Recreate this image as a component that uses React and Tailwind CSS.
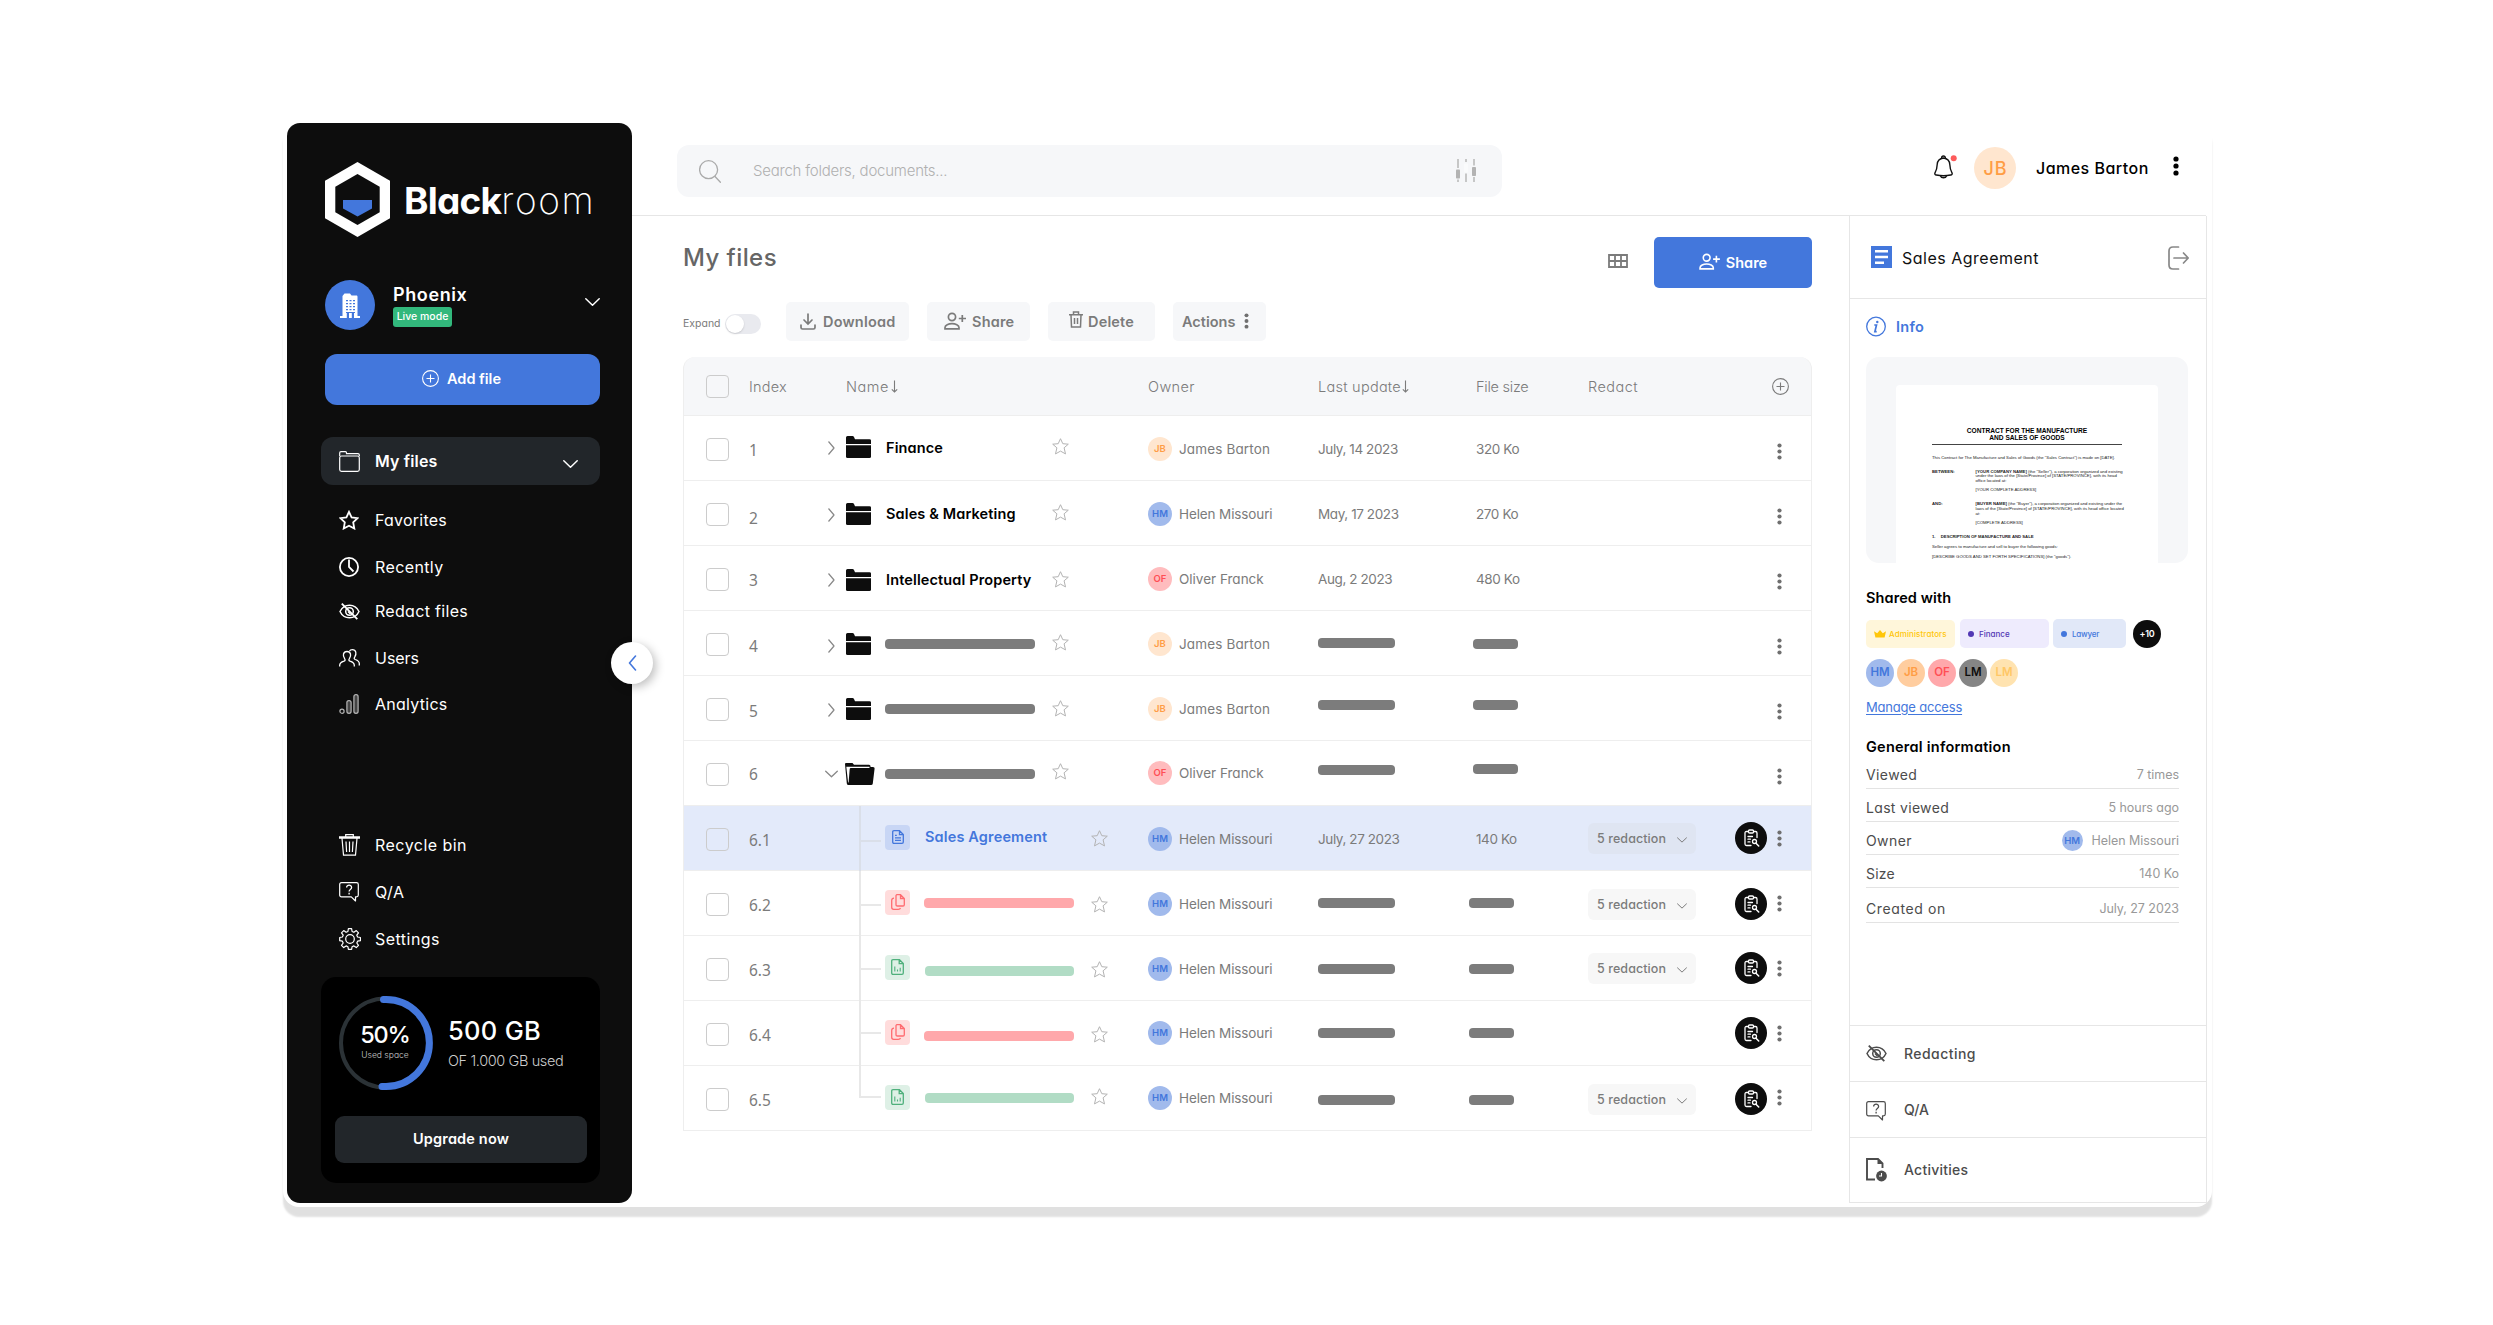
import { Fragment } from 'react';
import clsx from 'clsx';

const mainNav = [
  { label: 'Favorites', icon: StarBoldIcon, gap: 'mt-[25px]', text: 'tracking-[0.23px]' },
  { label: 'Recently', icon: ClockIcon, gap: 'mt-[27px]', text: 'tracking-[0.38px]' },
  { label: 'Redact files', icon: EyeOffIcon, gap: 'mt-[24px]', text: 'tracking-[0.31px]' },
  { label: 'Users', icon: UsersIcon, gap: 'mt-[27px]', text: 'tracking-[-0.03px]' },
  { label: 'Analytics', icon: ChartIcon, gap: 'mt-[26px]', text: 'tracking-[0.26px]' },
];

const footNav = [
  { label: 'Recycle bin', icon: BinIcon, gap: 'mt-[121px]', text: 'tracking-[0.47px]' },
  { label: 'Q/A', icon: QuestionIcon, gap: 'mt-[27px]', text: 'tracking-[0.5px]' },
  { label: 'Settings', icon: GearIcon, gap: 'mt-[27px]', text: 'tracking-[0.47px]' },
];

const people = {
  jb: { initials: 'JB', name: 'James Barton', color: 'bg-[#ffe6cf] text-[#ff9d45]', text: 'tracking-[0.14px]' },
  hm: { initials: 'HM', name: 'Helen Missouri', color: 'bg-[#a1baec] text-[#4377dc]', text: 'tracking-[-0.12px]' },
  of: { initials: 'OF', name: 'Oliver Franck', color: 'bg-[#ffbcbe] text-[#ff4f55]', text: '' },
};

// pt: top padding of each cell, in column order
const folders = [
  { id: 1, name: 'Finance', owner: 'jb', date: 'July, 14 2023', size: '320 Ko', pt: ['pt-6', 'pt-[25px]', 'pt-5', 'pt-[22px]', 'pt-[22px]', 'pt-[21px]', 'pt-[23px]', 'pt-[23px]'] },
  { id: 2, name: 'Sales & Marketing', owner: 'hm', date: 'May, 17 2023', size: '270 Ko', pt: ['pt-[27px]', 'pt-[27px]', 'pt-[22px]', 'pt-[23px]', 'pt-[23px]', 'pt-[21px]', 'pt-[23px]', 'pt-[23px]'] },
  { id: 3, name: 'Intellectual Property', owner: 'of', date: 'Aug, 2 2023', size: '480 Ko', pt: ['pt-6', 'pt-[27px]', 'pt-[23px]', 'pt-6', 'pt-[25px]', 'pt-[21px]', 'pt-[23px]', 'pt-[23px]'] },
  { id: 4, owner: 'jb', pt: ['pt-[25px]', 'pt-7', 'pt-[22px]', 'pt-7', 'pt-[23px]', 'pt-[21px]', 'pt-[27px]', 'pt-7'] },
  { id: 5, owner: 'jb', pt: ['pt-[25px]', 'pt-[27px]', 'pt-[22px]', 'pt-7', 'pt-6', 'pt-[21px]', 'pt-6', 'pt-6'] },
  { id: 6, owner: 'of', open: true, pt: ['pt-[23px]', 'pt-[29px]', 'pt-[22px]', 'pt-7', 'pt-[22px]', 'pt-5', 'pt-6', 'pt-[23px]'] },
];

const files = [
  { id: '6.1', kind: 'doc', name: 'Sales Agreement', date: 'July, 27 2023', size: '140 Ko', redact: true, pt: ['pt-[34px]', 'pt-[21px]', 'pt-6', 'pt-[21px]', 'pt-[23px]', 'pt-[23px]', 'pt-[17px]', 'pt-4', 'pt-6'] },
  { id: '6.2', kind: 'pdf', redact: true, pt: ['pt-[33px]', 'pt-[27px]', 'pt-[25px]', 'pt-[21px]', 'pt-[27px]', 'pt-[27px]', 'pt-[18px]', 'pt-[17px]', 'pt-6'] },
  { id: '6.3', kind: 'sheet', redact: true, pt: ['pt-8', 'pt-[30px]', 'pt-[25px]', 'pt-[21px]', 'pt-7', 'pt-7', 'pt-[17px]', 'pt-4', 'pt-6'] },
  { id: '6.4', kind: 'pdf', pt: ['pt-[31px]', 'pt-[30px]', 'pt-[25px]', 'pt-5', 'pt-[27px]', 'pt-[27px]', 'pt-[18px]', 'pt-4', 'pt-6'] },
  { id: '6.5', kind: 'sheet', redact: true, last: true, pt: ['pt-[30px]', 'pt-[27px]', 'pt-[22px]', 'pt-5', 'pt-[29px]', 'pt-[29px]', 'pt-[18px]', 'pt-[17px]', 'pt-[23px]'] },
];

const kinds = {
  doc: { box: 'bg-[#c8d6f5] text-[#4377dc]', bar: 'bg-[#4377dc]', icon: DocIcon },
  pdf: { box: 'bg-[#ffdcdc] text-[#ff6b70]', bar: 'bg-[#ffa8ab] -ml-px w-[150px]', icon: CopyIcon },
  sheet: { box: 'bg-[#def0e6] text-[#4fb07c]', bar: 'bg-[#b1dcc5] w-[149px]', icon: SheetIcon },
};

const details = [
  { label: 'Viewed', value: '7 times', h: 'h-[27px]', text: 'tracking-[0.4px]' },
  { label: 'Last viewed', value: '5 hours ago', h: 'h-[33px]', text: 'tracking-[0.32px]' },
  { label: 'Owner', value: 'Helen Missouri', avatar: true, h: 'h-[33px]', text: 'tracking-[0.4px]' },
  { label: 'Size', value: '140 Ko', h: 'h-[33px]', text: 'tracking-[0.2px]' },
  { label: 'Created on', value: 'July, 27 2023', h: 'h-[35px]', text: 'tracking-[0.6px]' },
];

const headCols = 'grid-cols-[65px_97px_302px_170px_158px_112px_184px_1fr]';
const folderCols = 'grid-cols-[65px_79px_18px_39px_167px_96px_170px_158px_300px_1fr]';
const fileCols = 'grid-cols-[65px_110px_26px_40px_166px_57px_170px_158px_112px_147px_41px_1fr]';

export default function App() {
  return (
    <div className="h-[1325px] w-[2493px] overflow-hidden bg-white pl-[283px] pt-[119px] font-['Inter',sans-serif] [font-feature-settings:'cv11']">
      <div className="flex h-[1088px] w-[1929px] rounded-[16px] bg-white p-1 shadow-[0_10px_2px_rgba(0,0,0,0.12)]">
        <Sidebar />
        <div className="flex w-[1575px] flex-col">
          <TopBar />
          <div className="flex h-[988px]">
            <Files />
            <InfoPanel />
          </div>
        </div>
      </div>
    </div>
  );
}

function Sidebar() {
  return (
    <aside className="relative flex h-[1080px] w-[345px] shrink-0 flex-col rounded-[13px] bg-[#0d0d0d] pl-[34px] pr-8 text-white">
      {/* Logo */}
      <div className="ml-1 mt-[39px] flex h-[75px] items-center">
        <svg width="65" height="75" viewBox="0 0 65 75">
          <path d="M32.5 0 65 18.8V56.2L32.5 75 0 56.2V18.8Z" fill="#fff" />
          <path d="M32.5 12 54.7 24.8V50.3L32.5 63 10.3 50.3V24.8Z" fill="#0d0d0d" />
          <path d="M18 38H47V46.5L32.5 54.5 18 46.5Z" fill="#4377dc" />
        </svg>
        <div className="ml-[14px] whitespace-nowrap pt-[3px] text-[37px] leading-[40px]">
          <span className="font-bold tracking-[-0.75px]">Black</span>
          <span className="font-extralight tracking-[1.6px]">room</span>
        </div>
      </div>

      {/* Workspace */}
      <div className="ml-1 mt-[43px] flex h-[50px]">
        <div className="flex h-[50px] w-[50px] items-center justify-center rounded-full bg-[#4377dc]">
          <BuildingIcon />
        </div>
        <div className="ml-[18px]">
          <div className="mt-1 text-[18px] font-semibold leading-[21px] tracking-[0.6px]">Phoenix</div>
          <div className="mt-[2px] flex h-5 w-[59px] items-center justify-center rounded-[3px] bg-[#32b87c] text-[10.5px] font-medium">Live mode</div>
        </div>
        <Chevron className="ml-auto mt-[18px] h-2 w-[15px]" />
      </div>

      <button className="ml-1 mt-6 flex h-[51px] items-center justify-center rounded-xl bg-[#4377dc] pb-[2px] pr-[2px] text-[14.5px] font-semibold">
        <PlusCircle className="mr-2 h-[17px] w-[17px]" />
        Add file
      </button>

      <div className="mt-8 flex h-12 items-center rounded-xl bg-[#22262a] pl-[18px] pr-[22px]">
        <FolderLineIcon />
        <span className="ml-[15px] text-[16px] font-semibold tracking-[0.15px]">My files</span>
        <Chevron className="ml-auto mt-[6px] h-2 w-[15px]" />
      </div>

      {[...mainNav, ...footNav].map(({ label, icon: Icon, gap, text }) => (
        <div key={label} className={clsx('flex h-5 items-center pl-[18px] text-[16px]', gap)}>
          <span className="flex w-9 shrink-0 items-center"><Icon /></span>
          <span className={text}>{label}</span>
        </div>
      ))}

      {/* Storage */}
      <div className="mt-7 flex h-[206px] flex-col rounded-[15px] bg-black px-[14px]">
        <div className="mt-[19px] flex">
          <div className="relative ml-1 h-[94px] w-[94px]">
            <svg width="94" height="94" viewBox="0 0 94 94" fill="none">
              <circle cx="46.500" cy="47" r="44.500" stroke="#2b3236" strokeWidth="4" />
              <path d="M44.5 3.6H47a43.4 43.4 0 0 1 0 86.8H43" stroke="#4377dc" strokeWidth="7" strokeLinecap="round" />
            </svg>
            <div className="absolute inset-0 pr-[2px] text-center">
              <div className="mt-[26px] text-[23.5px] font-medium leading-[26px] tracking-[-1.1px]">50%</div>
              <div className="mt-[2px] text-[8.5px] font-light leading-[10px] text-[#ccc]">Used space</div>
            </div>
          </div>
          <div className="ml-[15px]">
            <div className="mt-[20px] text-[25.5px] font-medium leading-[30px] tracking-[0.3px]">500 GB</div>
            <div className="mt-[5px] text-[14.5px] font-light leading-5 tracking-[-0.38px] text-[#ccc]">OF 1.000 GB used</div>
          </div>
        </div>
        <button className="mt-[26px] flex h-[47px] w-[252px] items-center justify-center rounded-[9px] bg-[#22262a] pb-[2px] text-[14.5px] font-semibold tracking-[0.16px]">
          Upgrade now
        </button>
      </div>

      {/* Collapse handle sits over the sidebar edge */}
      <div className="absolute right-[-21px] top-[519px] flex h-[42px] w-[42px] items-center justify-center rounded-full bg-white text-[#4377dc] shadow-[3px_3px_10px_rgba(0,0,0,0.25)]">
        <svg width="9" height="16" viewBox="0 0 9 16" fill="none" stroke="currentColor" strokeWidth="1.6" strokeLinecap="round" strokeLinejoin="round">
          <path d="M7.5 1 1.5 8l6 7" />
        </svg>
      </div>
    </aside>
  );
}

function TopBar() {
  return (
    <header className="flex h-[93px] w-[1574px] border-b border-[#e6e6e6]">
      <div className="ml-[45px] mt-[22px] flex h-[52px] w-[825px] items-center rounded-xl bg-[#f6f7f9] pl-[22px] pr-[26px] text-[#aaa]">
        <svg width="22" height="23" viewBox="0 0 22 23" fill="none" stroke="currentColor" strokeWidth="1.3" strokeLinecap="round">
          <circle cx="9.6" cy="9.7" r="9" />
          <path d="m16 16.5 5.4 5.8" />
        </svg>
        <span className="ml-8 text-[15px] font-light tracking-[-0.23px] text-[#b0b0b0]">Search folders, documents...</span>
        <svg className="ml-auto" width="20" height="24" viewBox="0 0 20 24" fill="#b3b3b3">
          <path d="M1.3 0h1.4v9H1.3zM1.3 20.5h1.4V23H1.3zM9.3 0h1.4v3H9.3zM9.3 14.5h1.4V23H9.3zM17.3 0h1.4v6.5h-1.4zM17.3 18h1.4v5h-1.4z" />
          <rect y="10.5" width="4" height="9" rx=".8" />
          <rect x="16" y="8" width="4" height="9" rx=".8" />
          <rect x="8" y="4.5" width="4" height="9" rx=".8" fill="#fafbfc" />
        </svg>
      </div>
      <div className="ml-[432px] mt-6 flex h-[42px] items-center">
        <svg className="mb-[2px]" width="23" height="24" viewBox="0 0 23 24" fill="none" stroke="#111" strokeWidth="1.4">
          <path d="M9.5 3C5.8 3.5 3.4 6 3.2 9.5c-.2 4.500-.9 6.400-2.200 8.400-.5 1 .1 2 1.300 2.100 4.800.9 9.600.9 14.400 0 1.200-.1 1.800-1.100 1.300-2.100-1.300-2-2-3.900-2.200-8.400C15.600 6 13.200 3.5 9.5 3Z" />
          <path d="M7.6 3.2C7.6.3 11.400.3 11.400 3.200M6.5 21c.8 2.400 5.200 2.400 6 0" />
          <circle cx="19.700" cy="3.200" r="3" fill="#fd5b5b" stroke="none" />
        </svg>
        <span className="ml-[17px] flex h-[42px] w-[42px] items-center justify-center rounded-full bg-[#ffe6cf] pl-px text-[18px] font-medium tracking-[0.9px] text-[#ff9d45]">JB</span>
        <span className="ml-[20px] whitespace-nowrap text-[16px] font-medium tracking-[0.48px] text-black">James Barton</span>
        <svg className="mb-[5px] ml-[24px]" width="6" height="20" viewBox="0 0 6 20" fill="#000">
          <circle cx="3" cy="3" r="2.6" />
          <circle cx="3" cy="10" r="2.6" />
          <circle cx="3" cy="17" r="2.6" />
        </svg>
      </div>
    </header>
  );
}

function Files() {
  return (
    <main className="w-[1217px] shrink-0 pl-[51px]">
      <div className="flex h-[93px] w-[1129px]">
        <h1 className="mt-[27px] text-[24px] font-medium leading-[30px] tracking-[0.43px] text-[#666]">My files</h1>
        <svg className="ml-auto mr-[26px] mt-[38px]" width="20" height="14" viewBox="0 0 20 14" fill="none" stroke="#7b7b7b" strokeWidth="1.8">
          <path d="M1 1h18v12H1zM1 7h18M7 1v12M13 1v12" />
        </svg>
        <button className="mt-[21px] flex h-[51px] w-[158px] items-center justify-center rounded-[5px] bg-[#4377dc] text-[14.5px] font-semibold text-white">
          <UserPlusIcon className="mb-px mr-[6px] h-[17px] w-[21px]" />
          Share
        </button>
      </div>

      {/* Toolbar */}
      <div className="flex h-[48px] text-[14.5px] font-semibold text-[#7b7b7b]">
        <span className="mt-[5px] w-[38px] text-[10.5px] font-normal leading-[20px]">Expand</span>
        <span className="ml-[4px] mt-[5px] h-5 w-9 rounded-full bg-[#e9eaef] p-px">
          <span className="block h-[18px] w-[18px] rounded-full bg-white shadow-[0_1px_2px_rgba(0,0,0,0.15)]" />
        </span>
        <div className="-mt-[7px] ml-[25px] flex gap-[18px]">
          <button className="flex h-[39px] w-[123px] items-center rounded-[5px] bg-[#f6f7f9] pl-[14px] tracking-[0.2px]">
            <svg className="mr-[7px]" width="16" height="17" viewBox="0 0 16 17" fill="none" stroke="currentColor" strokeWidth="1.7" strokeLinecap="round">
              <path d="M8 1v9.500M4 7l4 4 4-4M1 12v2.500q0 1.500 1.500 1.500h11q1.500 0 1.500-1.500V12" />
            </svg>
            Download
          </button>
          <button className="flex h-[39px] w-[103px] items-center rounded-[5px] bg-[#f6f7f9] pl-[17px] tracking-[0.2px]">
            <UserPlusIcon className="mr-[6px] h-[18px] w-[22px]" />
            Share
          </button>
          <button className="flex h-[39px] w-[107px] items-center rounded-[5px] bg-[#f6f7f9] pl-[21px] tracking-[0.17px]">
            <svg className="mb-[3px] mr-[5px]" width="14" height="17" viewBox="0 0 14 17" fill="none" stroke="currentColor" strokeWidth="1.5">
              <path d="M0 3.800h14M4.500 3.500V1h5v2.500M2 4l.5 12h9L12 4M5.500 7v6M8.500 7v6" />
            </svg>
            Delete
          </button>
          <button className="flex h-[39px] w-[93px] items-center rounded-[5px] bg-[#f6f7f9] pl-[9px]">
            Actions
            <Dots className="ml-[9px] h-[16px] w-[5px]" />
          </button>
        </div>
      </div>

      {/* Files table */}
      <div className="w-[1129px]">
        <div className={clsx('grid h-[59px] items-center rounded-t-xl border border-t-0 border-[#eee] bg-[#f6f7f9] pt-[2px] text-[14.5px] font-light text-[#7b7b7b]', headCols)}>
          <span className="ml-[22px] h-[23px] w-[23px] rounded-[4px] border border-[#ccc]" />
          <span className="tracking-[0.23px]">Index</span>
          <span className="flex items-center tracking-[0.5px]">Name<ArrowDown className="ml-[2px]" /></span>
          <span className="tracking-[0.4px]">Owner</span>
          <span className="flex items-center tracking-[0.26px]">Last update<ArrowDown className="ml-px" /></span>
          <span className="tracking-[-0.25px]">File size</span>
          <span className="tracking-[0.45px]">Redact</span>
          <PlusCircle className="h-[17px] w-[17px]" />
        </div>

        <div className="border-x border-[#eee] text-[13.5px] text-[#7b7b7b]">
          {folders.map((row) => (
            <FolderRow key={row.id} row={row} />
          ))}
          {files.map((row, i) => (
            <FileRow key={row.id} row={row} active={i === 0} />
          ))}
        </div>
      </div>
    </main>
  );
}

function FolderRow({ row }) {
  const [idPt, chevPt, iconPt, namePt, starPt, ownerPt, datePt, sizePt] = row.pt;
  return (
    <div className={clsx('grid h-[65px] border-b border-[#eee]', folderCols)}>
      <Check />
      <Index className={idPt}>{row.id}</Index>
      <div className={clsx('text-[#888]', chevPt)}>
        {row.open ? <Chevron className="-ml-[3px] h-2 w-[13px]" /> : (
          <svg width="7" height="14" viewBox="0 0 7 14" fill="none" stroke="currentColor" strokeWidth="1.2" strokeLinejoin="round">
            <path d="m.5.5 5.500 6.500-5.500 6.500" />
          </svg>
        )}
      </div>
      <div className={iconPt}>{row.open ? <FolderOpenIcon /> : <FolderIcon />}</div>
      <div className={namePt}>
        {row.name ? (
          <div className="whitespace-nowrap pl-px text-[14.5px] font-semibold leading-5 tracking-[0.13px] text-black">{row.name}</div>
        ) : (
          <div className="h-[10px] w-[150px] rounded-[4px] bg-[#7c7c7c]" />
        )}
      </div>
      <div className={starPt}><StarIcon /></div>
      <Owner who={row.owner} className={ownerPt} />
      <Cell className={datePt} bar="w-[77px]">{row.date}</Cell>
      <Cell className={sizePt} bar="-ml-[3px] w-[45px]">{row.size}</Cell>
      <Dots className="ml-px mt-[27px] h-[17px] w-[5px]" />
    </div>
  );
}

function FileRow({ row, active }) {
  const [tickPt, namePt, starPt, ownerPt, datePt, sizePt, redactPt, reviewPt, dotsPt] = row.pt;
  const kind = kinds[row.kind];
  const KindIcon = kind.icon;
  return (
    <div className={clsx('grid h-[65px] border-b border-[#eee]', fileCols, active && 'bg-[#e3eafa]')}>
      <Check />
      <Index className="pt-6">{row.id}</Index>
      <div className={clsx('border-l-2', active ? 'border-[#dadfe9]' : 'border-[#e8e8e8]', row.last ? 'h-8' : '-mb-px', tickPt)}>
        <div className={clsx('h-[2px] w-[20px]', active ? 'bg-[#dadfe9]' : 'bg-[#e8e8e8]')} />
      </div>
      <div className="pt-[19px]">
        <div className={clsx('flex h-[25px] w-[25px] items-center justify-center rounded-[4px]', kind.box)}><KindIcon /></div>
      </div>
      <div className={namePt}>
        {row.name ? (
          <div className="whitespace-nowrap text-[14.5px] font-semibold leading-5 tracking-[0.15px] text-[#4377dc]">{row.name}</div>
        ) : (
          <div className={clsx('h-[10px] rounded-[4px]', kind.bar)} />
        )}
      </div>
      <div className={starPt}><StarIcon /></div>
      <Owner who="hm" className={ownerPt} />
      <Cell className={datePt} bar="w-[77px]">{row.date}</Cell>
      <Cell className={sizePt} bar="-ml-[7px] w-[45px]">{row.size}</Cell>
      <div className={redactPt}>
        {row.redact && (
          <div className={clsx('flex h-[31px] w-[108px] items-center rounded-[6px] pl-[9px] pt-px text-[12.5px] font-medium tracking-[0.08px]', active ? 'bg-[#dfe5f2]' : 'bg-[#f7f7f7]')}>
            5 redaction
            <Chevron className="ml-[11px] mt-[2px] h-[6px] w-[10px]" />
          </div>
        )}
      </div>
      <div className={reviewPt}>
        <div className="flex h-8 w-8 items-center justify-center rounded-full bg-[#0d0d0d] text-white"><ReviewIcon /></div>
      </div>
      <div className={dotsPt}><Dots className="ml-px h-[17px] w-[5px]" /></div>
    </div>
  );
}

function Check() {
  return <span className="ml-[22px] mt-[22px] h-[23px] w-[23px] rounded-[4px] border border-[#ccc]" />;
}

function Index({ className, children }) {
  return <div className={clsx("font-['Noto_Sans',sans-serif] text-[15.5px] leading-5", className)}>{children}</div>;
}

function Cell({ className, bar, children }) {
  return (
    <div className={className}>
      {children ? <div className="whitespace-nowrap leading-5 tracking-[-0.4px]">{children}</div> : <div className={clsx('h-[10px] rounded-[4px] bg-[#7c7c7c]', bar)} />}
    </div>
  );
}

function Owner({ who, className }) {
  const person = people[who];
  return (
    <div className={className}>
      <div className="flex h-6 items-center">
        <span className={clsx('flex h-6 w-6 items-center justify-center rounded-full text-[9.5px] font-semibold', person.color)}>{person.initials}</span>
        <span className={clsx('ml-[7px] whitespace-nowrap', person.text)}>{person.name}</span>
      </div>
    </div>
  );
}

function InfoPanel() {
  return (
    <aside className="flex h-[987px] w-[358px] flex-col border-x border-b border-[#e6e6e6]">
      <div className="flex h-[83px] items-center border-b border-[#e6e6e6] pl-[21px] pr-[17px] pt-[3px]">
        <svg className="mb-[3px]" width="21" height="22" viewBox="0 0 21 22">
          <path d="M0 0h21v22H0z" fill="#4377dc" />
          <path d="M4 4h13v2.500H4zM4 9.700h13v2.500H4zM4 15.400h9v2.500H4z" fill="#fff" />
        </svg>
        <span className="ml-[10px] text-[16px] tracking-[0.5px] text-[#111]">Sales Agreement</span>
        <svg className="ml-auto" width="21" height="24" viewBox="0 0 21 24" fill="none" stroke="#888" strokeWidth="1.7" strokeLinecap="round" strokeLinejoin="round">
          <path d="M10.500 1H5Q1 1 1 5v14q0 4 4 4h5.500M6 12h14M15.500 7l4.700 5-4.700 5" />
        </svg>
      </div>

      <div className="pl-4">
        <div className="mt-[17px] flex h-[22px] items-center text-[#4377dc]">
          <svg width="20" height="21" viewBox="0 0 20 21" fill="none" stroke="currentColor" strokeWidth="1.3">
            <circle cx="10" cy="10.500" r="9.300" />
            <path d="M8.300 9h2.200l-1.600 6.600h1.800" strokeWidth="1.700" />
            <circle cx="11.300" cy="6" r="1.200" fill="currentColor" stroke="none" />
          </svg>
          <span className="ml-[10px] text-[14.5px] font-semibold tracking-[0.3px]">Info</span>
        </div>

        <div className="mt-[19px] h-[206px] w-[322px] overflow-hidden rounded-[13px] bg-[#f6f7f9] pl-[30px] pt-7">
          <ContractPage />
        </div>

        {/* Sharing */}
        <h2 className="mt-[25px] text-[14.5px] font-semibold leading-5 tracking-[0.1px] text-black">Shared with</h2>
        <div className="mt-[11px] flex h-[30px] items-center text-[8px] font-medium">
          <span className="flex h-7 w-[89px] items-center rounded-[5px] bg-[#fff6da] pl-2 text-[#ffc60a]">
            <svg className="mr-[3px]" width="12" height="8" viewBox="0 0 12 8" fill="currentColor">
              <path d="M0 1.200 3.200 3.300 6 0l2.800 3.300L12 1.200 10.600 7.500H1.400Z" />
            </svg>
            <span className="tracking-[0.1px]">Administrators</span>
          </span>
          <span className="ml-[5px] flex h-[29px] w-[89px] items-center rounded-[5px] bg-[#eeebfd] pl-2 text-[#5238b4]">
            <span className="mr-[5px] h-[6px] w-[6px] rounded-full bg-[#5238b4]" />
            Finance
          </span>
          <span className="ml-1 flex h-[29px] w-[73px] items-center rounded-[5px] bg-[#e1e8f8] pl-2 text-[#4377dc]">
            <span className="mr-[5px] h-[6px] w-[6px] rounded-full bg-[#4377dc]" />
            <span className="tracking-[-0.2px]">Lawyer</span>
          </span>
          <span className="ml-[7px] flex h-7 w-7 items-center justify-center rounded-full bg-[#0d0d0d] text-[9px] font-semibold tracking-[-0.2px] text-white">+10</span>
        </div>
        <div className="mt-[10px] flex gap-[3px] text-[11.5px] font-semibold">
          <span className="flex h-7 w-7 items-center justify-center rounded-full bg-[#a1baec] text-[#4377dc]">HM</span>
          <span className="flex h-7 w-7 items-center justify-center rounded-full bg-[#ffcd9f] text-[#ff9d45]">JB</span>
          <span className="flex h-7 w-7 items-center justify-center rounded-full bg-[#ffa8ab] text-[#ff4f55]">OF</span>
          <span className="flex h-7 w-7 items-center justify-center rounded-full bg-[#858585] text-[#0d0d0d]">LM</span>
          <span className="flex h-7 w-7 items-center justify-center rounded-full bg-[#ffe3b0] text-[#ffc766]">LM</span>
        </div>
        <div className="mt-[10px] text-[13px] leading-5 tracking-[-0.2px] text-[#4377dc] underline underline-offset-2">Manage access</div>

        <h2 className="mt-[20px] text-[14.5px] font-semibold leading-5 tracking-[0.24px] text-black">General information</h2>
        <div className="mt-[5px] w-[313px]">
          {details.map((d) => (
            <div key={d.label} className={clsx('flex items-end justify-between border-b border-[#e3e3e3] pb-[3px]', d.h)}>
              <span className={clsx('text-[14px] leading-5 text-[#4c4c4c]', d.text)}>{d.label}</span>
              <span className="flex h-5 items-center text-[12.5px] leading-5 text-[#999]">
                {d.avatar && <span className="mr-[9px] flex h-[21px] w-[21px] items-center justify-center rounded-full bg-[#a1baec] text-[9.5px] font-semibold text-[#4377dc]">HM</span>}
                <span className="tracking-[-0.05px]">{d.value}</span>
              </span>
            </div>
          ))}
        </div>
      </div>

      <div className="mt-auto text-[14px] font-[450] text-[#4c4c4c]">
        <div className="flex h-14 items-center border-t border-[#e6e6e6] pl-4">
          <span className="w-[38px]"><EyeOffIcon /></span>
          <span className="pt-px tracking-[0.45px]">Redacting</span>
        </div>
        <div className="flex h-14 items-center border-t border-[#e6e6e6] pl-4">
          <span className="w-[38px] pt-1"><QuestionIcon /></span>
          <span className="pt-px">Q/A</span>
        </div>
        <div className="flex h-[65px] items-center border-t border-[#e6e6e6] pl-4">
          <svg className="mr-[17px]" width="21" height="24" viewBox="0 0 21 24">
            <path d="M9 21.500H1V1h11l4.500 4.500V10" fill="none" stroke="currentColor" strokeWidth="1.9" />
            <path d="M11.500.5V6H17Z" fill="currentColor" />
            <circle cx="15.500" cy="18" r="5.400" fill="currentColor" />
            <path d="M15.500 15v3H13" fill="none" stroke="#fff" strokeWidth="1.1" />
          </svg>
          <span className="tracking-[0.25px]">Activities</span>
        </div>
      </div>
    </aside>
  );
}

function ContractPage() {
  const parties = [
    {
      tag: 'BETWEEN:', name: '[YOUR COMPANY NAME]', lead: ' (the "Seller"), a corporation organized and existing',
      rest: ['under the laws of the [State/Province] of [STATE/PROVINCE], with its head', 'office located at:'],
      address: '[YOUR COMPLETE ADDRESS]',
    },
    {
      tag: 'AND:', name: '[BUYER NAME]', lead: ' (the "Buyer"), a corporation organized and existing under the',
      rest: ['laws of the [State/Province] of [STATE/PROVINCE], with its head office located', 'at:'],
      address: '[COMPLETE ADDRESS]',
    },
  ];
  return (
    <div className="h-[178px] w-[262px] whitespace-nowrap rounded-t-[4px] bg-white px-9 pt-[42px] font-['Liberation_Sans',sans-serif] text-[4.25px] leading-[4.7px] text-[#222]">
      <div className="text-center text-[6.6px] font-bold leading-[7.5px] text-black">
        CONTRACT FOR THE MANUFACTURE
        <br />
        AND SALES OF GOODS
      </div>
      <div className="mt-[2px] h-px w-[190px] bg-[#444]" />
      <p className="mt-[11px]">This Contract for The Manufacture and Sales of Goods (the "Sales Contract") is made on [DATE].</p>
      <div className="mt-[9px] grid grid-cols-[43.5px_1fr] gap-y-[9px]">
        {parties.map((p) => (
          <Fragment key={p.tag}>
            <b>{p.tag}</b>
            <div>
              <b>{p.name}</b>{p.lead}
              {p.rest.map((line) => <div key={line}>{line}</div>)}
              <div className="mt-[4.7px]">{p.address}</div>
            </div>
          </Fragment>
        ))}
      </div>
      <p className="mt-[9.5px] font-bold"><span className="mr-[4px]">1.</span> DESCRIPTION OF MANUFACTURE AND SALE</p>
      <p className="mt-[5px]">Seller agrees to manufacture and sell to buyer the following goods:</p>
      <p className="mt-[5px]">[DESCRIBE GOODS AND SET FORTH SPECIFICATIONS] (the "goods").</p>
    </div>
  );
}

/* Icons */

function Chevron({ className }) {
  return (
    <svg className={clsx('shrink-0', className)} viewBox="0 0 15 8" fill="none" stroke="currentColor" strokeWidth="1.5" strokeLinecap="round" strokeLinejoin="round">
      <path d="M.8.8 7.500 7.200 14.200.8" />
    </svg>
  );
}

function Dots({ className }) {
  return (
    <svg className={clsx('shrink-0', className)} viewBox="0 0 5 17" fill="#6f6f6f">
      <circle cx="2.500" cy="2.500" r="2.100" />
      <circle cx="2.500" cy="8.500" r="2.100" />
      <circle cx="2.500" cy="14.500" r="2.100" />
    </svg>
  );
}

function PlusCircle({ className }) {
  return (
    <svg className={className} viewBox="0 0 17 17" fill="none" stroke="currentColor" strokeWidth="1.1">
      <circle cx="8.500" cy="8.500" r="7.900" />
      <path d="M8.500 4.500v8M4.500 8.500h8" />
    </svg>
  );
}

function ArrowDown({ className }) {
  return (
    <svg className={className} width="7" height="13" viewBox="0 0 7 13" fill="none" stroke="currentColor" strokeWidth="1.1">
      <path d="M3.500.5V12M.8 9.300l2.700 2.700 2.700-2.700" />
    </svg>
  );
}

function UserPlusIcon({ className }) {
  return (
    <svg className={className} viewBox="0 0 22 18" fill="none" stroke="currentColor" strokeWidth="1.7">
      <circle cx="8" cy="5" r="3.600" />
      <path d="M1 16.800v-1.300c0-2.300 3.500-3.800 7-3.800s7 1.500 7 3.800v1.300zM18.300 3v7M14.800 6.500H22" />
    </svg>
  );
}

function StarIcon() {
  return (
    <svg width="17" height="17" viewBox="0 0 17 17" fill="none" stroke="#b3b3b3" strokeWidth="1" strokeLinejoin="round">
      <path d="m8.500.7 2.300 5 5.500.5-4.200 3.600 1.400 6.100-5-2.800-5 2.800 1.400-6.100L.7 6.200l5.500-.5Z" />
    </svg>
  );
}

function StarBoldIcon() {
  return (
    <svg width="20" height="20" viewBox="0 0 20 20" fill="none" stroke="currentColor" strokeWidth="1.8">
      <path d="m10 1.800 2.600 5.500 6 .8-4.400 4.200 1.100 6.200L10 15.700l-5.300 2.800 1.100-6.200L1.400 8.100l6-.8Z" />
    </svg>
  );
}

function ClockIcon() {
  return (
    <svg width="20" height="20" viewBox="0 0 20 20" fill="none" stroke="currentColor" strokeWidth="1.8">
      <circle cx="10" cy="10" r="9.100" />
      <path d="M10 2.500V10l4.500 4.500" />
    </svg>
  );
}

function EyeOffIcon() {
  return (
    <svg width="21" height="17" viewBox="0 0 21 17" fill="none" stroke="currentColor" strokeWidth="1.5">
      <path d="M1 8.500C3 4.300 6.500 2.200 10.500 2.200s7.500 2.100 9.500 6.300c-2 4.200-5.500 6.300-9.500 6.300S3 12.700 1 8.500Z" />
      <circle cx="10.500" cy="8.500" r="3.800" />
      <path d="m2.800.7 15.500 15.500" strokeWidth="1.9" />
      <path d="M9 8.500l2.500 2.500" />
    </svg>
  );
}

function UsersIcon() {
  return (
    <svg width="21" height="18" viewBox="0 0 21 18" fill="none" stroke="currentColor" strokeWidth="1.3">
      <path d="M.7 17.500v-1.200c0-2 1.500-3.200 4.300-4.100 1.400-.5 1.300-1.600.6-2.500C3.500 6.700 4 2.500 8 2.500s4.500 4.200 2.400 7.200c-.7.9-.8 2 .6 2.500 2.800.9 4.300 2.100 4.300 4.100v1.200" />
      <path d="M10.500 2.300C11 1.200 12 .7 13.300.7c4 0 4.500 4.200 2.400 7.500-.7.9-.8 1.800.6 2.300 2.800.9 4 2.100 4 4.100v2" />
    </svg>
  );
}

function ChartIcon() {
  return (
    <svg width="20" height="20" viewBox="0 0 20 20" fill="#444" stroke="#b5b5b5" strokeWidth="1.2">
      <circle cx="3" cy="17.200" r="2.100" fill="none" />
      <rect x="7.900" y="6.600" width="4.200" height="12.700" rx="2" />
      <rect x="14.900" y=".7" width="4.200" height="18.600" rx="2" />
    </svg>
  );
}

function BinIcon() {
  return (
    <svg width="21" height="22" viewBox="0 0 21 22" fill="none" stroke="currentColor" strokeWidth="1.2">
      <path d="M0 4.200h21M0 2.900h21M6.700 3V.7h7.600V3M3 4.300l1.500 16.800h12L18 4.300M7 7.500l.6 10.500M10.500 7.500V18M14 7.500 13.400 18" />
    </svg>
  );
}

function QuestionIcon() {
  return (
    <svg width="20" height="20" viewBox="0 0 20 20" fill="none" stroke="currentColor" strokeWidth="1.2" strokeLinejoin="round">
      <path d="M2.500.7h15q1.800 0 1.800 1.800v10.600q0 1.800-1.800 1.800h-1V19l-4.200-4.100H2.500Q.7 14.900.7 13.100V2.500Q.7.7 2.500.7Z" />
      <path d="M7.600 5.500c0-3.200 5-3.200 5 0 0 2-2.500 2-2.500 4M10.100 10.800v1.600" strokeWidth="1.3" />
    </svg>
  );
}

function GearIcon() {
  return (
    <svg width="22" height="22" viewBox="0 0 22 22" fill="none" stroke="currentColor" strokeWidth="1.2" strokeLinejoin="round">
      <circle cx="11" cy="11" r="4.300" />
      <path d="M9.400.7h3.200l.5 2.800 1.800.8 2.400-1.700 2.200 2.200-1.700 2.400.8 1.800 2.800.5v3.200l-2.800.5-.8 1.800 1.700 2.400-2.200 2.200-2.400-1.700-1.800.8-.5 2.600H9.400l-.5-2.600-1.800-.8-2.400 1.700-2.200-2.200L4.200 15l-.8-1.800-2.700-.5V9.500L3.400 9l.8-1.800-1.700-2.400 2.200-2.200 2.400 1.700 1.800-.8Z" />
    </svg>
  );
}

function FolderLineIcon() {
  return (
    <svg width="21" height="21" viewBox="0 0 21 21" fill="none" stroke="currentColor" strokeWidth="1.2">
      <path d="M.7 5V2Q.7.7 2 .7h4.500Q7.500.7 7.500 2v.7H19q1.300 0 1.300 1.300V5" />
      <rect x=".7" y="5" width="19.600" height="15.300" rx="1.800" />
    </svg>
  );
}

function BuildingIcon() {
  return (
    <svg width="20" height="25" viewBox="0 0 20 25">
      <path d="M2.500 3 4.500.5h5.500L11.500 2.500H17l.5 1V23H20v2H0v-2h2.500Z" fill="#fff" />
      <path d="M6 7h2v1.300H6zM9.500 7h2v1.300h-2zM13 7h2v1.300h-2zM6 10h2v1.300H6zM9.500 10h2v1.300h-2zM13 10h2v1.300h-2zM6 13h2v1.300H6zM9.500 13h2v1.300h-2zM13 13h2v1.300h-2zM6 16h2v1.300H6zM9.500 16h2v1.300h-2zM13 16h2v1.300h-2zM6 19h9v1H6zM6.800 20h2.200v5H6.800zM11.800 20H14v5h-2.200z" fill="#4377dc" />
    </svg>
  );
}

function FolderIcon() {
  return (
    <svg width="25" height="22" viewBox="0 0 25 22">
      <path d="M0 8V1.500Q0 0 1.500 0h5q1 0 1.500 1l1 2.300h14.500Q25 3.300 25 4.500V8Z" fill="#0d0d0d" />
      <path d="M0 9.200h25V20.500q0 1.500-1.500 1.500h-22Q0 22 0 20.500Z" fill="#0d0d0d" />
    </svg>
  );
}

function FolderOpenIcon() {
  return (
    <svg className="-ml-px" width="30" height="22" viewBox="0 0 30 22" fill="#0d0d0d">
      <path d="M0 1Q0 0 1 0h6.500l1.500 1.800h15q1.500 0 1.500 1.500V4h2.500q1.800 0 1.600 1.500L27.800 20.500Q27.600 22 26 22H3.500Q2 22 1.800 20.500Z" />
      <path d="M1.300 3.800h23.200v1.100H5.800q-1 0-1.100 1.200L3.600 19.500h-.5Z" fill="#fff" />
    </svg>
  );
}

function DocIcon() {
  return (
    <svg width="12" height="14" viewBox="0 0 12 14" fill="none" stroke="currentColor" strokeWidth="1.3">
      <path d="M2 .7h5.500L11.300 4.500V12q0 1.300-1.300 1.300H2Q.7 13.300.7 12V2Q.7.7 2 .7ZM7.500 1v3.700h3.700M3 5.300h1.800M3 7.800h6M3 10.300h6" />
    </svg>
  );
}

function CopyIcon() {
  return (
    <svg width="14" height="16" viewBox="0 0 14 16" fill="none" stroke="currentColor" strokeWidth="1.3">
      <path d="M5.500.7h4l3.800 3.800v6.200q0 1.300-1.300 1.300H6.500Q5 12 5 10.700V2Q5 .7 6 .7ZM9.500 1v3.500h3.500M3 4.200Q.7 4.200.7 6.500v6.800q0 2 2 2h4.500q1.800 0 2.300-1.300" />
    </svg>
  );
}

function SheetIcon() {
  return (
    <svg width="13" height="16" viewBox="0 0 13 16" fill="none" stroke="currentColor" strokeWidth="1.3">
      <path d="M2 .7h6.500L12.300 4.500V14q0 1.300-1.300 1.300H2Q.7 15.300.7 14V2Q.7.7 2 .7ZM8.200 1v3.700h3.900" />
      <path d="M3.800 7.500v5M6.500 10.500v2M9.200 8.800v3.700" strokeWidth="1.1" />
    </svg>
  );
}

function ReviewIcon() {
  return (
    <svg className="ml-px" width="16" height="18" viewBox="0 0 16 18" fill="none" stroke="currentColor" strokeWidth="1.3" strokeLinecap="round" strokeLinejoin="round">
      <path d="M4 2.500H2.500Q1 2.500 1 4v11q0 1.500 1.500 1.500h4.500M10 2.500h1.500Q13 2.500 13 4v4.500" />
      <rect x="4.500" y="1" width="5" height="3" rx="1" />
      <path d="M4 7.500h4.500M4 10.200h2.500M4 12.900h2" />
      <circle cx="10.500" cy="12.500" r="2" />
      <path d="m12 14.200 2.700 2.800" strokeWidth="1.5" />
    </svg>
  );
}
